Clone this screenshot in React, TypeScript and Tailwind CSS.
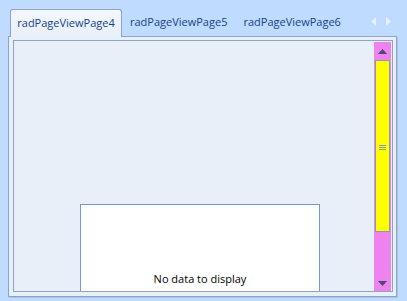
export default function App() {
  const tabs = ["radPageViewPage4", "radPageViewPage5", "radPageViewPage6"];

  return (
    <div
      className="w-[407px] h-[301px] bg-[#bfdbff] flex flex-col overflow-hidden"
      style={{ fontFamily: '"Open Sans", "Liberation Sans", sans-serif' }}
    >
      {/* Tab strip */}
      <div className="h-[36px] flex items-end pl-[10px] pr-[10px] relative">
        {tabs.map((t, i) =>
          i === 0 ? (
            <div
              key={t}
              className="h-[28px] w-[112px] flex items-center justify-center rounded-t-[3px] border border-b-0 border-[#8da4c4] bg-gradient-to-b from-[#f4f8fd] to-[#e8eff9] text-[11px] text-[#15428b] relative z-10 -mb-px"
            >
              {t}
            </div>
          ) : (
            <div
              key={t}
              className="h-[27px] px-[8px] flex items-center text-[11px] text-[#15428b]"
            >
              {t}
            </div>
          )
        )}
        <div className="ml-auto h-[27px] flex items-center gap-[10px] pr-[6px] pb-[2px]">
          <svg width="5" height="9" viewBox="0 0 5 9">
            <path d="M5 0 L0 4.5 L5 9 Z" fill="#e6f0ff" />
          </svg>
          <svg width="5" height="9" viewBox="0 0 5 9">
            <path d="M0 0 L5 4.5 L0 9 Z" fill="#e6f0ff" />
          </svg>
        </div>
      </div>

      {/* Panel */}
      <div className="ml-[8px] mr-[10px] h-[261px] border border-[#8da4c4] bg-[#e8eff9] pt-[3px] pl-[4px] pr-[3px] pb-[4px] flex shadow-[1px_1px_0_#a9c4e8]">
        <div className="flex-1 border border-[#8da4c4] flex pt-[1px] pr-[1px]">
          {/* content area */}
          <div className="flex-1 flex flex-col justify-end pl-[66px] pr-[54px]">
            <div className="h-[87px] bg-white border border-b-0 border-[#6f9bdb] flex items-end justify-center pb-[4px] text-[11px] text-black">
              No data to display
            </div>
          </div>
          {/* scrollbar */}
          <div className="w-[17px] bg-[#ee82ee] flex flex-col">
            <div className="h-[18px] flex items-center justify-center">
              <svg width="9" height="5" viewBox="0 0 9 5">
                <path d="M0 5 L4.5 0 L9 5 Z" fill="#4a4a6a" />
              </svg>
            </div>
            <div className="h-[172px] mx-[1px] bg-[#ffff00] border border-[#8a9ab0] flex items-center justify-center">
              <div className="flex flex-col gap-[1px] mt-[2px]">
                <div className="w-[7px] h-px bg-[#8a9ab0]" />
                <div className="w-[7px] h-px bg-[#8a9ab0]" />
                <div className="w-[7px] h-px bg-[#8a9ab0]" />
              </div>
            </div>
            <div className="flex-1 flex items-end justify-center pb-[5px]">
              <svg width="9" height="5" viewBox="0 0 9 5">
                <path d="M0 0 L4.5 5 L9 0 Z" fill="#4a4a6a" />
              </svg>
            </div>
          </div>
        </div>
      </div>
    </div>
  );
}
